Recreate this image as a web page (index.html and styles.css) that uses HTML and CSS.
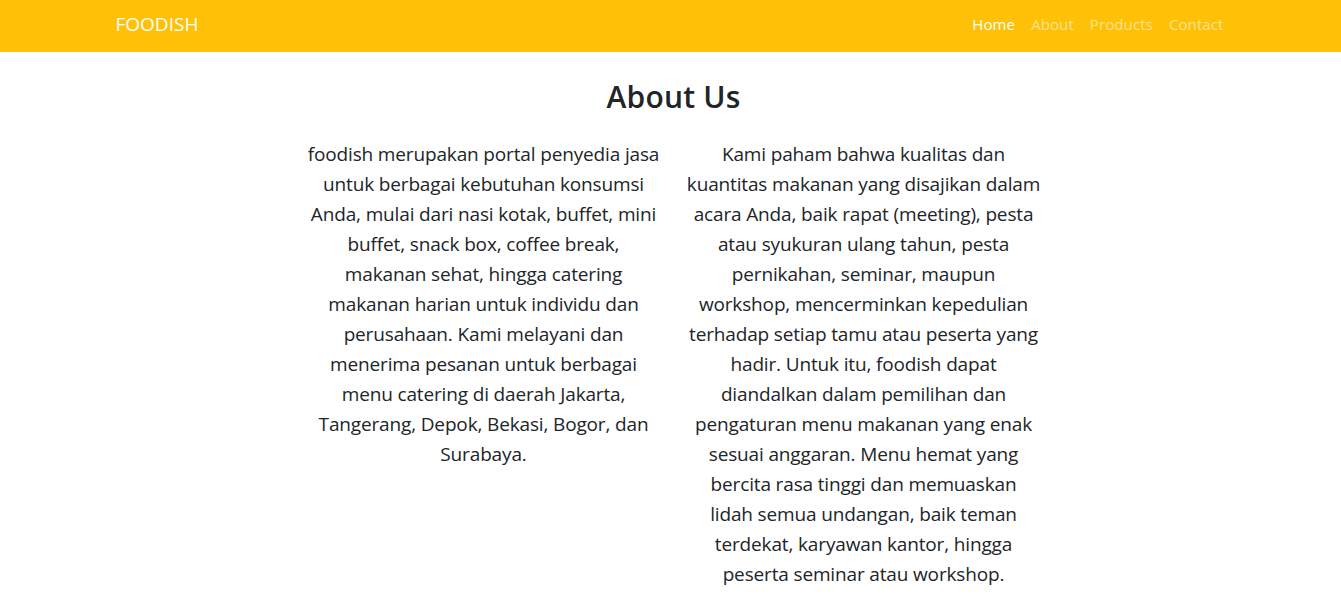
FILE: index.html
```html
<!DOCTYPE html>
<html lang="id">
<head>
<meta charset="utf-8">
<title>Foodish</title>
<link rel="stylesheet" href="styles.css">
</head>
<body>
<nav class="navbar">
  <div class="container navbar-inner">
    <a class="brand" href="#">FOODISH</a>
    <ul class="nav">
      <li><a class="nav-link active" href="#">Home</a></li>
      <li><a class="nav-link" href="#">About</a></li>
      <li><a class="nav-link" href="#">Products</a></li>
      <li><a class="nav-link" href="#">Contact</a></li>
    </ul>
  </div>
</nav>
<main class="container about">
  <h2 class="title">About Us</h2>
  <div class="row">
    <p class="lead">foodish merupakan portal penyedia jasa<br>untuk berbagai kebutuhan konsumsi<br>Anda, mulai dari nasi kotak, buffet, mini<br>buffet, snack box, coffee break,<br>makanan sehat, hingga catering<br>makanan harian untuk individu dan<br>perusahaan. Kami melayani dan<br>menerima pesanan untuk berbagai<br>menu catering di daerah Jakarta,<br>Tangerang, Depok, Bekasi, Bogor, dan<br>Surabaya.</p>
    <p class="lead">Kami paham bahwa kualitas dan<br>kuantitas makanan yang disajikan dalam<br>acara Anda, baik rapat (meeting), pesta<br>atau syukuran ulang tahun, pesta<br>pernikahan, seminar, maupun<br>workshop, mencerminkan kepedulian<br>terhadap setiap tamu atau peserta yang<br>hadir. Untuk itu, foodish dapat<br>diandalkan dalam pemilihan dan<br>pengaturan menu makanan yang enak<br>sesuai anggaran. Menu hemat yang<br>bercita rasa tinggi dan memuaskan<br>lidah semua undangan, baik teman<br>terdekat, karyawan kantor, hingga<br>peserta seminar atau workshop.</p>
  </div>
</main>
</body>
</html>
```
FILE: styles.css
```css
* { box-sizing: border-box; }
html, body { margin: 0; }
body {
  font-family: "Open Sans", "Noto Sans", "Liberation Sans", sans-serif;
  font-size: 16px;
  line-height: 1.5;
  color: #212529;
  background: #fff;
}
.container {
  width: 1140px;
  margin: 0 auto;
  padding: 0 15px;
}
.navbar {
  background: #ffc107;
  height: 52px;
}
.navbar-inner {
  display: flex;
  align-items: center;
  justify-content: space-between;
  height: 100%;
  padding-right: 9px;
  padding-bottom: 4px;
}
.brand {
  color: #fff;
  font-size: 19px;
  text-decoration: none;
  line-height: 30px;
}
.nav {
  list-style: none;
  margin: 0;
  padding: 0;
  display: flex;
}
.nav-link {
  display: block;
  padding: 8px;
  color: rgba(255,255,255,.55);
  text-decoration: none;
  font-size: 15px;
  letter-spacing: 0.1px;
}
.nav-link.active { color: #fff; }
.about {
  text-align: center;
  padding-left: 21px;
}
.title {
  font-size: 30px;
  font-weight: 600;
  line-height: 1.2;
  letter-spacing: 0.2px;
  margin: 27px 0 8px;
}
.row {
  display: grid;
  grid-template-columns: 360px 360px;
  column-gap: 20px;
  justify-content: center;
  padding-top: 16px;
}
.lead {
  margin: 0;
  font-size: 19px;
  line-height: 30px;
  letter-spacing: -0.15px;
  white-space: nowrap;
}
```
